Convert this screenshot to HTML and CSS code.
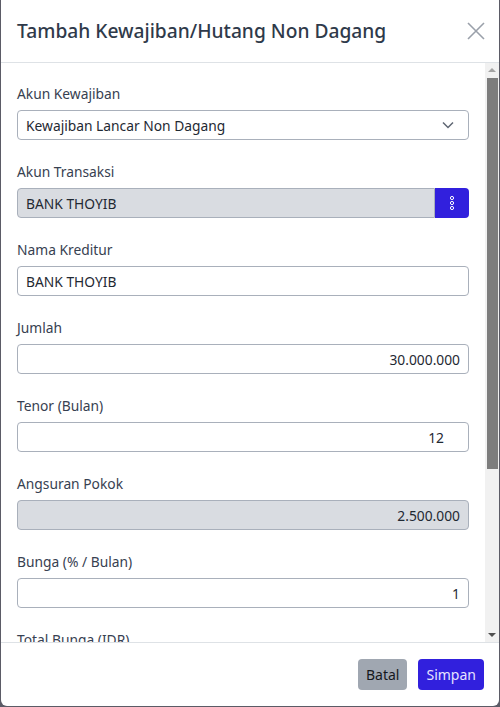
FILE: index.html
```html
<!DOCTYPE html>
<html lang="id">
<head>
<meta charset="utf-8">
<title>Tambah Kewajiban/Hutang Non Dagang</title>
<link rel="stylesheet" href="styles.css">
</head>
<body>
<div class="modal">
  <div class="modal-header">
    <h5 class="modal-title">Tambah Kewajiban/Hutang Non Dagang</h5>
    <button class="btn-close" type="button" aria-label="Close">
      <svg width="18" height="18" viewBox="0 0 18 18"><path d="M1 1L17 17M17 1L1 17" stroke="#9aa0aa" stroke-width="1.6" fill="none"/></svg>
    </button>
  </div>
  <div class="modal-main">
    <div class="modal-body">
      <div class="field">
        <label class="label">Akun Kewajiban</label>
        <div class="control select">
          <span>Kewajiban Lancar Non Dagang</span>
          <svg class="chevron" width="12" height="8" viewBox="0 0 12 8"><path d="M1 1.5L6 6.5L11 1.5" stroke="#5f6673" stroke-width="1.5" fill="none"/></svg>
        </div>
      </div>
      <div class="field">
        <label class="label">Akun Transaksi</label>
        <div class="group">
          <div class="control disabled grow">BANK THOYIB</div>
          <button class="btn-dots" type="button">
            <svg width="8" height="16" viewBox="0 0 8 16"><circle cx="4" cy="3" r="1.6" stroke="#fff" stroke-width="1" fill="none"/><circle cx="4" cy="8" r="1.6" stroke="#fff" stroke-width="1" fill="none"/><circle cx="4" cy="13" r="1.6" stroke="#fff" stroke-width="1" fill="none"/></svg>
          </button>
        </div>
      </div>
      <div class="field">
        <label class="label">Nama Kreditur</label>
        <div class="control">BANK THOYIB</div>
      </div>
      <div class="field">
        <label class="label">Jumlah</label>
        <div class="control right">30.000.000</div>
      </div>
      <div class="field">
        <label class="label">Tenor (Bulan)</label>
        <div class="control right number">12</div>
      </div>
      <div class="field">
        <label class="label">Angsuran Pokok</label>
        <div class="control right disabled">2.500.000</div>
      </div>
      <div class="field">
        <label class="label">Bunga (% / Bulan)</label>
        <div class="control right">1</div>
      </div>
      <div class="field">
        <label class="label">Total Bunga (IDR)</label>
        <div class="control right disabled"></div>
      </div>
    </div>
    <div class="scrollbar">
      <div class="sb-btn"><span class="tri-up"></span></div>
      <div class="sb-track">
        <div class="sb-thumb"></div>
      </div>
      <div class="sb-btn"><span class="tri-down"></span></div>
    </div>
  </div>
  <div class="modal-footer">
    <button class="btn btn-secondary" type="button">Batal</button>
    <button class="btn btn-primary" type="button">Simpan</button>
  </div>
</div>
</body>
</html>
```

FILE: styles.css
```css
* { box-sizing: border-box; }
html, body { margin: 0; padding: 0; }
body {
  background: #5b5b66;
  width: 500px;
  height: 707px;
  overflow: hidden;
  font-family: "Noto Sans", "Open Sans", sans-serif;
}
.modal {
  width: 498px;
  height: 706px;
  margin-left: 1px;
  background: #fff;
  border-radius: 0 0 6px 6px;
  display: flex;
  flex-direction: column;
  overflow: hidden;
}
.modal-header {
  height: 63px;
  flex: none;
  border-bottom: 1px solid #dee2e6;
  display: flex;
  align-items: center;
  justify-content: space-between;
  padding: 0 14px 0 16px;
}
.modal-title {
  margin: 0;
  font-size: 19.2px;
  font-weight: 500;
  color: #2f3a4a;
  line-height: 24px;
}
.btn-close {
  border: 0;
  background: none;
  padding: 0;
  width: 18px;
  height: 18px;
  display: flex;
}
.modal-main {
  flex: 1;
  min-height: 0;
  display: flex;
}
.modal-body {
  flex: 1;
  min-width: 0;
  overflow: hidden;
  padding: 21px 16px 0 16px;
}
.field { margin-bottom: 22px; }
.label {
  display: block;
  font-size: 13.8px;
  line-height: 20px;
  color: #374151;
  margin-bottom: 6px;
}
.control {
  height: 30px;
  border: 1px solid #a9b0bb;
  border-radius: 4px;
  padding: 0 8px;
  font-size: 13.8px;
  color: #1f2933;
  display: flex;
  align-items: center;
  background: #fff;
  white-space: nowrap;
}
.control.right { justify-content: flex-end; }
.control.number { padding-right: 24px; }
.control.disabled { background: #d9dce1; }
.select { justify-content: space-between; padding-right: 14px; }
.chevron { flex: none; }
.group { display: flex; }
.grow { flex: 1; border-radius: 4px 0 0 4px; }
.btn-dots {
  width: 34px;
  height: 30px;
  border: 0;
  background: #3120dd;
  border-radius: 0 4px 4px 0;
  display: flex;
  align-items: center;
  justify-content: center;
  padding: 0;
}
.scrollbar {
  width: 14px;
  flex: none;
  background: #f1f1f1;
  display: flex;
  flex-direction: column;
}
.sb-btn {
  height: 14px;
  flex: none;
  display: flex;
  align-items: center;
  justify-content: center;
}
.tri-up {
  width: 0; height: 0;
  border-left: 4px solid transparent;
  border-right: 4px solid transparent;
  border-bottom: 4px solid #a3a3a3;
}
.tri-down {
  width: 0; height: 0;
  border-left: 4px solid transparent;
  border-right: 4px solid transparent;
  border-top: 4px solid #505050;
}
.sb-track {
  flex: 1;
  padding: 1px 1px 0 2px;
}
.sb-thumb {
  height: 391px;
  background: #7d7d7d;
}
.modal-footer {
  flex: none;
  height: 64px;
  border-top: 1px solid #dee2e6;
  display: flex;
  justify-content: flex-end;
  align-items: flex-start;
  gap: 11px;
  padding: 16px 15px 0 0;
}
.btn {
  height: 31px;
  border: 0;
  border-radius: 4px;
  font-family: inherit;
  font-size: 14px;
  line-height: 20px;
  padding: 0 8px;
  white-space: nowrap;
}
.btn-secondary { background: #a0a7b1; color: #16181d; }
.btn-primary { background: #3120dd; color: #e6e3ff; }
```
